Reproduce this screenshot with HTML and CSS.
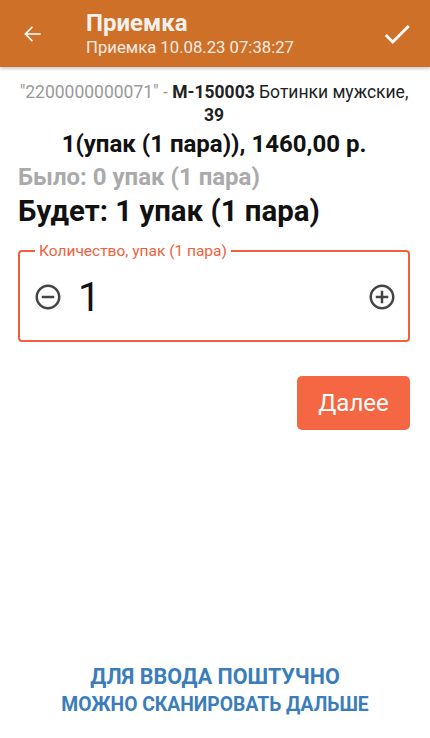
FILE: index.html
```html
<!DOCTYPE html>
<html lang="ru">
<head>
    <meta charset="UTF-8">
    <meta name="viewport" content="width=device-width, initial-scale=1.0">
    <title>Приемка</title>
    <link rel="stylesheet" href="styles.css">
</head>
<body>
    <div class="app">
        <header class="toolbar">
            <button class="tool-btn back">
                <svg width="26" height="26" viewBox="0 0 24 24"><path d="M20 11.2H7.6l5.3-5.3-1-1L4.8 12l7.1 7.1 1-1-5.3-5.3H20z" fill="#fff"/></svg>
            </button>
            <div class="titles">
                <div class="title">Приемка</div>
                <div class="subtitle">Приемка 10.08.23 07:38:27</div>
            </div>
            <button class="tool-btn done">
                <svg width="34" height="34" viewBox="0 0 24 24"><path d="M9 16.17L4.83 12l-1.42 1.41L9 19 21 7l-1.41-1.41z" fill="#fff"/></svg>
            </button>
        </header>

        <main class="content">
            <div class="product">
                <span class="barcode">"2200000000071" - </span><b>М-150003</b> Ботинки мужские, <b>39</b>
            </div>
            <div class="price">1(упак (1 пара)), 1460,00 р.</div>
            <div class="was">Было: 0 упак (1 пара)</div>
            <div class="will">Будет: 1 упак (1 пара)</div>

            <fieldset class="qty">
                <legend>Количество, упак (1 пара)</legend>
                <div class="qty-row">
                    <svg class="qty-icon" width="30" height="30" viewBox="0 0 24 24"><path d="M7 11v2h10v-2H7zm5-9C6.48 2 2 6.48 2 12s4.48 10 10 10 10-4.48 10-10S17.52 2 12 2zm0 18c-4.41 0-8-3.590-8-8s3.59-8 8-8 8 3.59 8 8-3.59 8-8 8z" fill="#444"/></svg>
                    <span class="qty-value">1</span>
                    <svg class="qty-icon" width="30" height="30" viewBox="0 0 24 24"><path d="M13 7h-2v4H7v2h4v4h2v-4h4v-2h-4V7zm-1-5C6.48 2 2 6.48 2 12s4.48 10 10 10 10-4.48 10-10S17.52 2 12 2zm0 18c-4.41 0-8-3.59-8-8s3.59-8 8-8 8 3.59 8 8-3.59 8-8 8z" fill="#444"/></svg>
                </div>
            </fieldset>

            <div class="actions">
                <button class="next">Далее</button>
            </div>
        </main>

        <footer class="hint">
            <div class="hint-1">ДЛЯ ВВОДА ПОШТУЧНО</div>
            <div class="hint-2">МОЖНО СКАНИРОВАТЬ ДАЛЬШЕ</div>
        </footer>
    </div>
</body>
</html>
```

FILE: styles.css
```css
body {
    margin: 0;
    font-family: Roboto, "Noto Sans", sans-serif;
    background: #fff;
}
.app {
    width: 430px;
    height: 738px;
    display: flex;
    flex-direction: column;
}
.toolbar {
    height: 67px;
    background-color: #cf7028;
    display: flex;
    align-items: center;
    box-shadow: 0 2px 3px rgba(0, 0, 0, 0.2);
    color: #fff;
}
.tool-btn {
    background: none;
    border: none;
    padding: 0;
    display: flex;
    align-items: center;
    justify-content: center;
}
.back {
    width: 64px;
    height: 64px;
}
.done {
    width: 60px;
    height: 64px;
    margin-left: auto;
    margin-right: 3px;
}
.titles {
    padding-left: 22px;
    margin-top: 0;
}
.title {
    font-size: 24px;
    font-weight: 700;
    line-height: 28px;
    color: #f4f0ec;
}
.subtitle {
    font-size: 16.7px;
    line-height: 22px;
    color: #f4ece4;
}
.content {
    padding: 14px 20px 0 18px;
    flex: 1;
}
.product {
    text-align: center;
    font-size: 17.5px;
    line-height: 23px;
    color: #222;
}
.barcode {
    color: #999;
}
.price {
    text-align: center;
    font-size: 24px;
    font-weight: 700;
    line-height: 35px;
    color: #111;
}
.was {
    font-size: 24px;
    font-weight: 700;
    color: #aaa;
    line-height: 31px;
}
.will {
    font-size: 29.4px;
    font-weight: 700;
    color: #111;
    line-height: 37px;
}
.qty {
    margin: 12px 0 0 0;
    border: 2px solid #f2603b;
    border-radius: 4px;
    padding: 0 11px 0 13px;
    height: 96px;
}
.qty legend {
    color: #f2603b;
    font-size: 15.5px;
    padding: 0 4px;
    margin-left: 2px;
}
.qty-row {
    display: flex;
    align-items: center;
    height: 74px;
}
.qty-value {
    font-size: 40px;
    color: #111;
    margin-left: 15px;
    flex: 1;
}
.actions {
    display: flex;
    justify-content: flex-end;
    margin-top: 34px;
}
.next {
    background-color: #f56742;
    color: #fff;
    border: none;
    border-radius: 5px;
    width: 113px;
    height: 54px;
    font-family: inherit;
    font-size: 24px;
}
.hint {
    text-align: center;
    color: #3a7dba;
    font-weight: 700;
    padding-bottom: 19px;
}
.hint-1 {
    font-size: 21.5px;
    line-height: 28px;
}
.hint-2 {
    font-size: 19.3px;
    line-height: 28px;
}
```
